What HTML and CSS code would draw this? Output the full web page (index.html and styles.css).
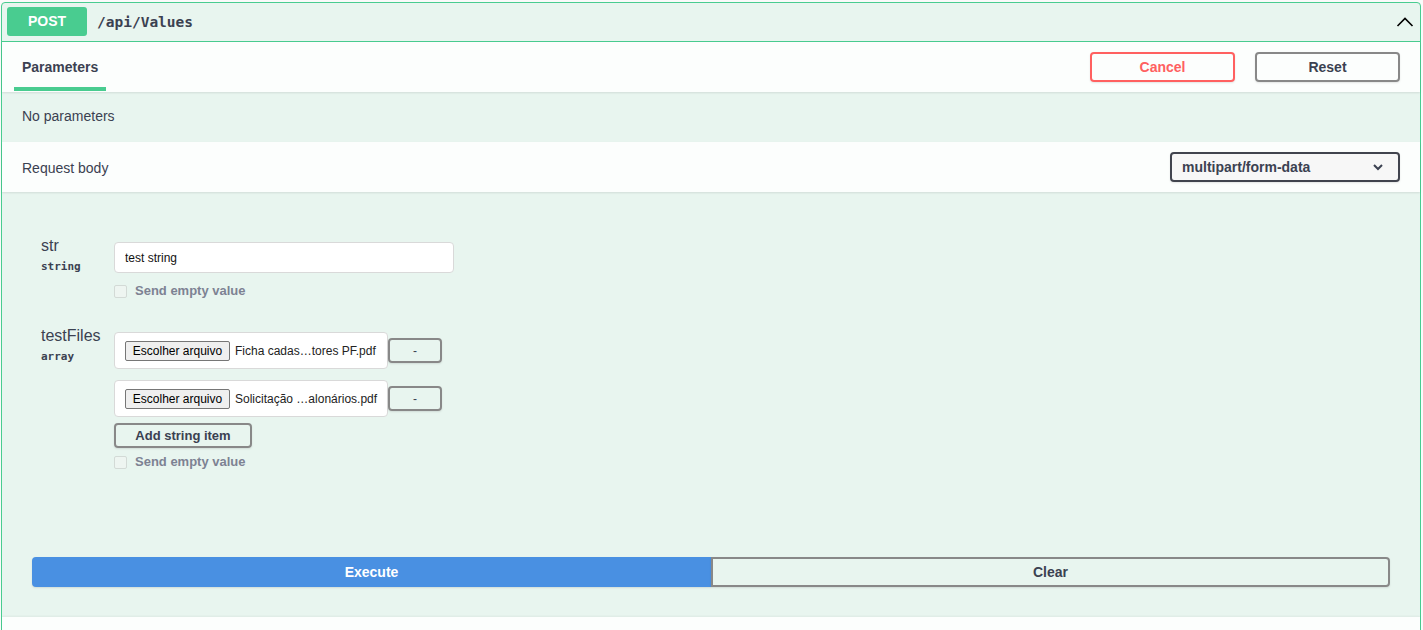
FILE: index.html
```html
<!DOCTYPE html>
<html lang="pt-BR">
<head>
  <meta charset="UTF-8">
  <meta name="viewport" content="width=device-width, initial-scale=1.0">
  <title>POST /api/Values</title>
  <link rel="stylesheet" href="styles.css">
</head>
<body>
  <div class="opblock">
    <div class="summary">
      <span class="method">POST</span>
      <span class="path">/api/Values</span>
      <svg class="arrow" width="20" height="20" viewBox="0 0 20 20">
        <polyline points="2.5,14 10,6.5 17.5,14" fill="none" stroke="#000" stroke-width="1.6"/>
      </svg>
    </div>

    <div class="section-header">
      <div class="tab"><h4>Parameters</h4></div>
      <div class="try-out">
        <button class="btn cancel">Cancel</button>
        <button class="btn reset">Reset</button>
      </div>
    </div>

    <div class="no-params">No parameters</div>

    <div class="section-header body-header">
      <span class="body-title">Request body</span>
      <div class="select">
        <span>multipart/form-data</span>
        <svg width="12" height="8" viewBox="0 0 12 8">
          <polyline points="2,2 6,6 10,2" fill="none" stroke="#3b4151" stroke-width="2"/>
        </svg>
      </div>
    </div>

    <div class="body">
      <div class="param-row">
        <div class="param-name">
          <div class="name">str</div>
          <div class="type">string</div>
        </div>
        <div class="param-col">
          <input class="text-input" type="text" value="test string">
          <label class="empty-value"><span class="check"></span>Send empty value</label>
        </div>
      </div>

      <div class="param-row">
        <div class="param-name">
          <div class="name">testFiles</div>
          <div class="type">array</div>
        </div>
        <div class="param-col">
          <div class="array-item">
            <div class="file-box">
              <button class="file-btn">Escolher arquivo</button>
              <span class="file-name">Ficha cadas…tores PF.pdf</span>
            </div>
            <button class="btn small remove">-</button>
          </div>
          <div class="array-item">
            <div class="file-box">
              <button class="file-btn">Escolher arquivo</button>
              <span class="file-name">Solicitação …alonários.pdf</span>
            </div>
            <button class="btn small remove">-</button>
          </div>
          <button class="btn small add-item">Add string item</button>
          <label class="empty-value tight"><span class="check"></span>Send empty value</label>
        </div>
      </div>

      <div class="execute-wrapper">
        <button class="btn execute">Execute</button>
        <button class="btn clear">Clear</button>
      </div>
    </div>

    <div class="responses-header"></div>
  </div>
</body>
</html>
```

FILE: styles.css
```css
body {
  margin: 0;
  background: #fafafa;
  font-family: "Liberation Sans", Arial, sans-serif;
  color: #3b4151;
  overflow: hidden;
}
button {
  font-family: "Liberation Sans", Arial, sans-serif;
  cursor: pointer;
}
.opblock {
  margin: 2px 2px 0 1px;
  border: 1px solid #49cc90;
  border-radius: 4px;
  background: #e8f5ef;
}
.summary {
  display: flex;
  align-items: center;
  padding: 4px 5px 5px;
  border-bottom: 1px solid #49cc90;
}
.method {
  width: 80px;
  height: 29px;
  line-height: 29px;
  text-align: center;
  background: #49cc90;
  color: #fff;
  font-size: 14px;
  font-weight: bold;
  border-radius: 3px;
}
.path {
  margin-left: 10px;
  flex: 1;
  font-family: "DejaVu Sans Mono", "Liberation Mono", monospace;
  font-size: 14.5px;
  font-weight: bold;
  color: #3b4151;
}
.arrow {
  display: block;
}
.section-header {
  display: flex;
  justify-content: space-between;
  align-items: center;
  height: 50px;
  padding: 0 20px 0 12px;
  background: #fcfefd;
  box-shadow: 0 1px 2px rgba(0, 0, 0, 0.1);
  position: relative;
}
.tab {
  align-self: stretch;
  display: flex;
  align-items: center;
  padding: 4px 8px 0;
  border-bottom: 4px solid #49cc90;
  margin-bottom: 1px;
}
.tab h4 {
  margin: 0;
  font-size: 14px;
  font-weight: bold;
}
.try-out {
  display: flex;
  gap: 20px;
}
.btn {
  background: transparent;
  border: 2px solid #888;
  border-radius: 4px;
  font-size: 14px;
  font-weight: bold;
  color: #3b4151;
  box-shadow: 0 1px 2px rgba(0, 0, 0, 0.1);
}
.cancel,
.reset {
  width: 145px;
  height: 30px;
}
.cancel {
  border-color: #ff6060;
  color: #ff6060;
}
.no-params {
  height: 50px;
  box-sizing: border-box;
  display: flex;
  align-items: center;
  padding: 0 0 3px 20px;
  font-size: 14px;
}
.body-header {
  padding-left: 20px;
}
.body-title {
  font-size: 14px;
  padding-top: 2px;
}
.select {
  width: 230px;
  height: 30px;
  box-sizing: border-box;
  display: flex;
  align-items: center;
  justify-content: space-between;
  padding: 0 14px 0 10px;
  border: 2px solid #41444e;
  border-radius: 4px;
  background: #f7f7f7;
  font-size: 14px;
  font-weight: bold;
  box-shadow: 0 1px 2px rgba(0, 0, 0, 0.1);
}
.body {
  padding: 45px 30px 30px;
}
.param-row {
  display: flex;
  padding-left: 9px;
}
.param-row + .param-row {
  margin-top: 29px;
}
.param-name {
  width: 73px;
}
.name {
  font-size: 16px;
  line-height: 18px;
}
.type {
  margin-top: 5px;
  font-family: "DejaVu Sans Mono", "Liberation Mono", monospace;
  font-size: 11px;
  line-height: 14px;
  font-weight: bold;
  color: #3b4151;
}
.param-col {
  display: flex;
  flex-direction: column;
  align-items: flex-start;
  padding-top: 5px;
}
.text-input {
  width: 340px;
  height: 31px;
  box-sizing: border-box;
  margin: 0;
  padding: 0 10px;
  border: 1px solid #d9d9d9;
  border-radius: 4px;
  background: #fff;
  font-family: "Liberation Sans", Arial, sans-serif;
  font-size: 12px;
  color: #111;
  outline: none;
}
.empty-value {
  display: flex;
  align-items: center;
  margin-top: 11px;
  font-size: 13px;
  line-height: 14px;
  font-weight: bold;
  color: #7d8293;
}
.empty-value.tight {
  margin-top: 7px;
}
.check {
  width: 13px;
  height: 13px;
  box-sizing: border-box;
  margin-right: 8px;
  border: 1px solid #d3dad6;
  border-radius: 2px;
  background: #eef5f1;
}
.array-item {
  display: flex;
  align-items: center;
  margin-bottom: 11px;
}
.array-item + .array-item {
  margin-bottom: 6px;
}
.file-box {
  width: 274px;
  height: 37px;
  box-sizing: border-box;
  display: flex;
  align-items: center;
  padding: 0 6px 0 10px;
  border: 1px solid #d9d9d9;
  border-radius: 4px;
  background: #fff;
}
.file-btn {
  flex-shrink: 0;
  width: 105px;
  height: 20px;
  padding: 0;
  border: 1px solid #767676;
  border-radius: 2px;
  background: #efefef;
  font-size: 12px;
  color: #000;
  white-space: nowrap;
}
.file-name {
  margin-left: 5px;
  font-size: 12px;
  color: #222;
  white-space: nowrap;
}
.small {
  height: 25px;
  font-size: 12px;
}
.remove {
  width: 54px;
  margin: 0;
  font-weight: normal;
}
.add-item {
  width: 138px;
  font-size: 13px;
}
.execute-wrapper {
  display: flex;
  margin-top: 88px;
}
.execute-wrapper .btn {
  flex: 1;
  height: 30px;
}
.execute {
  background: #4990e2;
  border-color: #4990e2;
  color: #fff;
  border-radius: 4px 0 0 4px;
}
.clear {
  border-radius: 0 4px 4px 0;
}
.responses-header {
  height: 50px;
  background: #fcfefd;
  box-shadow: 0 -1px 2px rgba(0, 0, 0, 0.05);
}
```
